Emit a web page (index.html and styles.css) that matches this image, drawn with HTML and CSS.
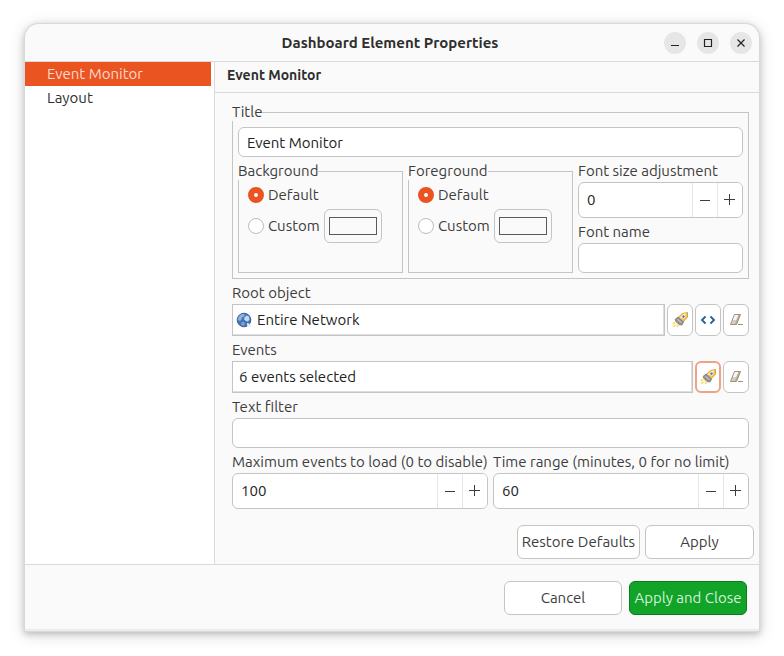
FILE: index.html
```html
<!DOCTYPE html>
<html lang="en">
<head>
  <meta charset="UTF-8">
  <title>Dashboard Element Properties</title>
  <link rel="stylesheet" href="styles.css">
</head>
<body>
  <svg class="sprite" aria-hidden="true">
    <symbol id="icon-rocket" viewBox="0 0 16 16">
      <path d="M0.500 11 4 9 7.500 12.500 5.500 15.500 3.500 14 0.500 15.500Z" fill="#fff3b8"/>
      <path d="M0.800 11.500 2.800 10.500 M1.500 15 3.500 13 M5.500 15 6.500 13" stroke="#f4cc50" fill="none"/>
      <path d="M6 5.500 10.500 1.500 15.500 0.500 15.500 5 11 10Z" fill="#fbc34a" stroke="#d08c35" stroke-width="0.800"/>
      <path d="M8 6 12 2.500 14 2" stroke="#ffe9a3" stroke-width="1.400" fill="none"/>
      <path d="M3 7.500 6 5 11.500 10 10 13 7 12.500 4 9.500Z" fill="#958f96" stroke="#7c777e" stroke-width="0.800"/>
      <path d="M5.500 7.200 9.500 10.800" stroke="#c5bfc4" stroke-width="1.200"/>
      <circle cx="11.500" cy="4.600" r="1.600" fill="#2f7ba8" stroke="#fff" stroke-width="0.800"/>
    </symbol>
    <symbol id="icon-eraser" viewBox="0 0 16 16">
      <path d="M6.500 2.500H12.500L8.500 12.500H2.500Z" fill="#f8f6f2"/>
      <path d="M4.500 8H8.500L6.500 12.500H2.500Z" fill="#d6cec0"/>
      <path d="M10.500 2.500H12.500L8.500 12.500H6.500Z" fill="#b9ae9b"/>
      <path d="M6.500 2.500H12.500L8.500 12.500H2.500ZM10 12.500H15" fill="none" stroke="#9d917c"/>
    </symbol>
    <symbol id="icon-code" viewBox="0 0 16 16">
      <path d="M5.500 4.500 2 8 5.500 11.500M10.500 4.500 14 8 10.500 11.500" fill="none" stroke="#1f619f" stroke-width="1.800"/>
    </symbol>
    <symbol id="icon-globe" viewBox="0 0 16 16">
      <circle cx="8" cy="8" r="6.800" fill="#4474b4" stroke="#3a629e"/>
      <path d="M2 8C2 4.500 4.500 2 7.500 2L9 3 8 4.500 6 5.500 5.500 7.500 4 9Z" fill="#8fb2dd"/>
      <path d="M8.500 5.500 10.500 3.500 13 4.500 13.500 7.500 12 9.500 10 9 8 7.500Z" fill="#c3d9f1"/>
      <path d="M5.500 10 8 10 9 12 7.500 14 5 12.500Z" fill="#7ba2d4"/>
      <path d="M11 11 13 11.500 15 13.500 13.500 15 11 13.500Z" fill="#e6ebf1"/>
    </symbol>
    <symbol id="icon-minus" viewBox="0 0 12 12"><path d="M1 6.500H11" stroke="#3d3d3d"/></symbol>
    <symbol id="icon-plus" viewBox="0 0 12 12"><path d="M0 5.500H11M5.500 0V11" stroke="#3d3d3d"/></symbol>
  </svg>

  <div class="window">
    <header class="titlebar">
      <h1>Dashboard Element Properties</h1>
      <div class="window-buttons">
        <button type="button" aria-label="Minimize"><svg viewBox="0 0 10 10"><path d="M1 7.500H9"/></svg></button>
        <button type="button" aria-label="Maximize"><svg viewBox="0 0 10 10"><path d="M1.500 1.500H8.500V8.500H1.500Z"/></svg></button>
        <button type="button" aria-label="Close"><svg viewBox="0 0 10 10"><path d="M1.500 1.500 8.500 8.500M8.500 1.500 1.500 8.500"/></svg></button>
      </div>
    </header>

    <div class="main">
      <nav class="sidebar">
        <a class="active" href="#event-monitor">Event Monitor</a>
        <a href="#layout">Layout</a>
      </nav>

      <section class="page" id="event-monitor">
        <h2>Event Monitor</h2>
        <form class="form">
          <fieldset class="group">
            <legend>Title</legend>
            <input class="text" type="text" aria-label="Title" value="Event Monitor">
            <div class="columns three">
              <fieldset class="group colors">
                <legend>Background</legend>
                <label class="radio"><input type="radio" name="bg" checked>Default</label>
                <div class="custom">
                  <label class="radio"><input type="radio" name="bg">Custom</label>
                  <button class="swatch" type="button" aria-label="Background color"><span></span></button>
                </div>
              </fieldset>
              <fieldset class="group colors">
                <legend>Foreground</legend>
                <label class="radio"><input type="radio" name="fg" checked>Default</label>
                <div class="custom">
                  <label class="radio"><input type="radio" name="fg">Custom</label>
                  <button class="swatch" type="button" aria-label="Foreground color"><span></span></button>
                </div>
              </fieldset>
              <div class="font">
                <div class="field">
                  <label for="font-size">Font size adjustment</label>
                  <div class="spin">
                    <input type="number" id="font-size" value="0">
                    <button type="button" aria-label="Decrease"><svg><use href="#icon-minus"/></svg></button>
                    <button type="button" aria-label="Increase"><svg><use href="#icon-plus"/></svg></button>
                  </div>
                </div>
                <div class="field">
                  <label for="font-name">Font name</label>
                  <input class="text" type="text" id="font-name">
                </div>
              </div>
            </div>
          </fieldset>

          <div class="field">
            <label for="root-object">Root object</label>
            <div class="selector">
              <div class="selected">
                <svg class="icon"><use href="#icon-globe"/></svg>
                <input type="text" id="root-object" value="Entire Network" readonly>
              </div>
              <button type="button" aria-label="Select object"><svg class="icon"><use href="#icon-rocket"/></svg></button>
              <button type="button" aria-label="Use context"><svg class="icon"><use href="#icon-code"/></svg></button>
              <button type="button" aria-label="Clear object"><svg class="icon"><use href="#icon-eraser"/></svg></button>
            </div>
          </div>

          <div class="field">
            <label for="events">Events</label>
            <div class="selector">
              <div class="selected">
                <input type="text" id="events" value="6 events selected" readonly>
              </div>
              <button class="focused" type="button" aria-label="Select events"><svg class="icon"><use href="#icon-rocket"/></svg></button>
              <button type="button" aria-label="Clear events"><svg class="icon"><use href="#icon-eraser"/></svg></button>
            </div>
          </div>

          <div class="field">
            <label for="filter">Text filter</label>
            <input class="text" type="text" id="filter">
          </div>

          <div class="columns">
            <div class="field">
              <label for="max-events">Maximum events to load (0 to disable)</label>
              <div class="spin">
                <input type="number" id="max-events" value="100">
                <button type="button" aria-label="Decrease"><svg><use href="#icon-minus"/></svg></button>
                <button type="button" aria-label="Increase"><svg><use href="#icon-plus"/></svg></button>
              </div>
            </div>
            <div class="field">
              <label for="time-range">Time range (minutes, 0 for no limit)</label>
              <div class="spin">
                <input type="number" id="time-range" value="60">
                <button type="button" aria-label="Decrease"><svg><use href="#icon-minus"/></svg></button>
                <button type="button" aria-label="Increase"><svg><use href="#icon-plus"/></svg></button>
              </div>
            </div>
          </div>
        </form>
        <div class="actions">
          <button class="btn wide" type="button">Restore Defaults</button>
          <button class="btn" type="button">Apply</button>
        </div>
      </section>
    </div>

    <footer class="footer">
      <button class="btn" type="button">Cancel</button>
      <button class="btn primary" type="button">Apply and Close</button>
    </footer>
  </div>

  <script>
    document.querySelectorAll('.spin').forEach(spin => {
      const input = spin.querySelector('input');
      const [minus, plus] = spin.querySelectorAll('button');
      minus.onclick = () => input.stepDown();
      plus.onclick = () => input.stepUp();
    });
  </script>
</body>
</html>
```
FILE: styles.css
```css
* { box-sizing: border-box; }
body { margin: 0; padding: 24px 25px; background: #fff; color: #3d3d3d; font: 15px/20px Ubuntu, "Noto Sans", sans-serif; }
h1, h2 { margin: 0; color: #2e2e2e; }
h1 { font-size: 15px; }
h2 { font-size: 14px; }
input, button { font: inherit; color: inherit; margin: 0; }
input { color: #222; min-width: 0; }
button { padding: 0; background: #fff; cursor: pointer; }
svg { display: block; }
.sprite { display: none; }

.window { background: #fafafa; border-radius: 14px 14px 0 0; overflow: hidden; box-shadow: 0 0 0 1px #d9d9d9, 0 2px 6px 1px rgba(0,0,0,.2), 0 3px 16px 2px rgba(0,0,0,.12); }

.titlebar { display: grid; grid-template-columns: 1fr auto 1fr; align-items: center; padding: 8px 7px 7px 3px; border-bottom: 1px solid #dadada; }
.titlebar h1 { grid-column: 2; }
.window-buttons { display: flex; justify-content: flex-end; gap: 11px; }
.window-buttons button { display: grid; place-items: center; width: 22px; height: 22px; border: 0; border-radius: 50%; background: #e6e6e6; }
.window-buttons svg { width: 10px; height: 10px; fill: none; stroke: #222; stroke-width: 1.2; }

.main { display: flex; border-bottom: 1px solid #dadada; }
.sidebar { width: 190px; padding-right: 3px; background: #fff; border-right: 1px solid #dadada; }
.sidebar a { display: block; padding: 2px 22px; color: #2e2e2e; text-decoration: none; }
.sidebar a.active { background: #e95420; color: #fbd9cd; }

.page { flex: 1; min-width: 0; }
.page h2 { padding: 3px 12px 7px; border-bottom: 1px solid #dadada; }
.form { display: flex; flex-direction: column; gap: 5px; padding: 10px 10px 16px 17px; }

.group { margin: 0; padding: 6px 5px 5px; min-width: 0; border: 1px solid #c4c4c4; }
.group legend { margin-left: -6px; padding: 0; line-height: 18px; background: #fafafa; }
.columns { display: grid; grid-template-columns: repeat(2, minmax(0, 1fr)); gap: 5px; }
.columns.three { grid-template-columns: repeat(3, minmax(0, 1fr)); }
.group > .columns { margin-top: 5px; }
.group.colors { padding: 5px 9px 3px; }
.group.colors legend { margin-left: -10px; }
.font { display: flex; flex-direction: column; gap: 5px; }
.field { display: flex; flex-direction: column; }
.field label { padding-bottom: 2px; line-height: 18px; white-space: nowrap; }

.text { width: 100%; height: 30px; padding: 0 8px; background: #fff; border: 1px solid #c4c4c4; border-radius: 6px; outline: 0; }

.radio { display: flex; align-items: center; gap: 4px; }
.radio input { appearance: none; width: 16px; height: 16px; background: #fff; border: 1px solid #bdbdbd; border-radius: 50%; }
.radio input:checked { border: 6px solid #e95420; }
.custom { display: flex; align-items: center; gap: 4px; margin-top: 4px; }
.swatch { width: 58px; height: 34px; padding: 6px 4px; background: #fafafa; border: 1px solid #c4c4c4; border-radius: 6px; }
.swatch span { display: block; height: 18px; border: 1px solid #5a5a5a; }

.spin { display: flex; height: 36px; background: #fff; border: 1px solid #c4c4c4; border-radius: 6px; overflow: hidden; }
.spin input { flex: 1; width: 0; padding: 0 8px; border: 0; outline: 0; background: none; appearance: textfield; }
.spin input::-webkit-inner-spin-button { display: none; }
.spin button { display: grid; place-items: center; width: 25px; border: 0; border-left: 1px solid #e6e6e6; }
.spin svg { width: 12px; height: 12px; }

.selector { display: flex; gap: 2px; }
.selected { flex: 1; display: flex; align-items: center; gap: 2px; height: 32px; padding: 0 4px 0 3px; background: #fff; border: 1px solid #c4c4c4; box-shadow: inset -1px -1px #dedede; }
.selected input { flex: 1; padding: 0 3px; border: 0; outline: 0; background: none; }
.selector button { display: grid; place-items: center; width: 26px; border: 1px solid #c4c4c4; border-radius: 6px; }
.selector button.focused { border: 2px solid #f0a284; }
.icon { width: 16px; height: 16px; }

.btn { min-width: 109px; height: 34px; padding: 0 4px; border: 1px solid #c4c4c4; border-radius: 6px; }
.btn.wide { min-width: 123px; }
.actions { display: flex; justify-content: flex-end; gap: 5px; padding: 0 5px 5px; }
.footer { display: flex; justify-content: flex-end; gap: 7px; padding: 16px 12px; box-shadow: inset 0 -2px 1px #ececec; }
.footer .btn { min-width: 118px; }
.btn.primary { background: #12a329; border-color: #0c7a1d; color: #d5f2d9; }
```
